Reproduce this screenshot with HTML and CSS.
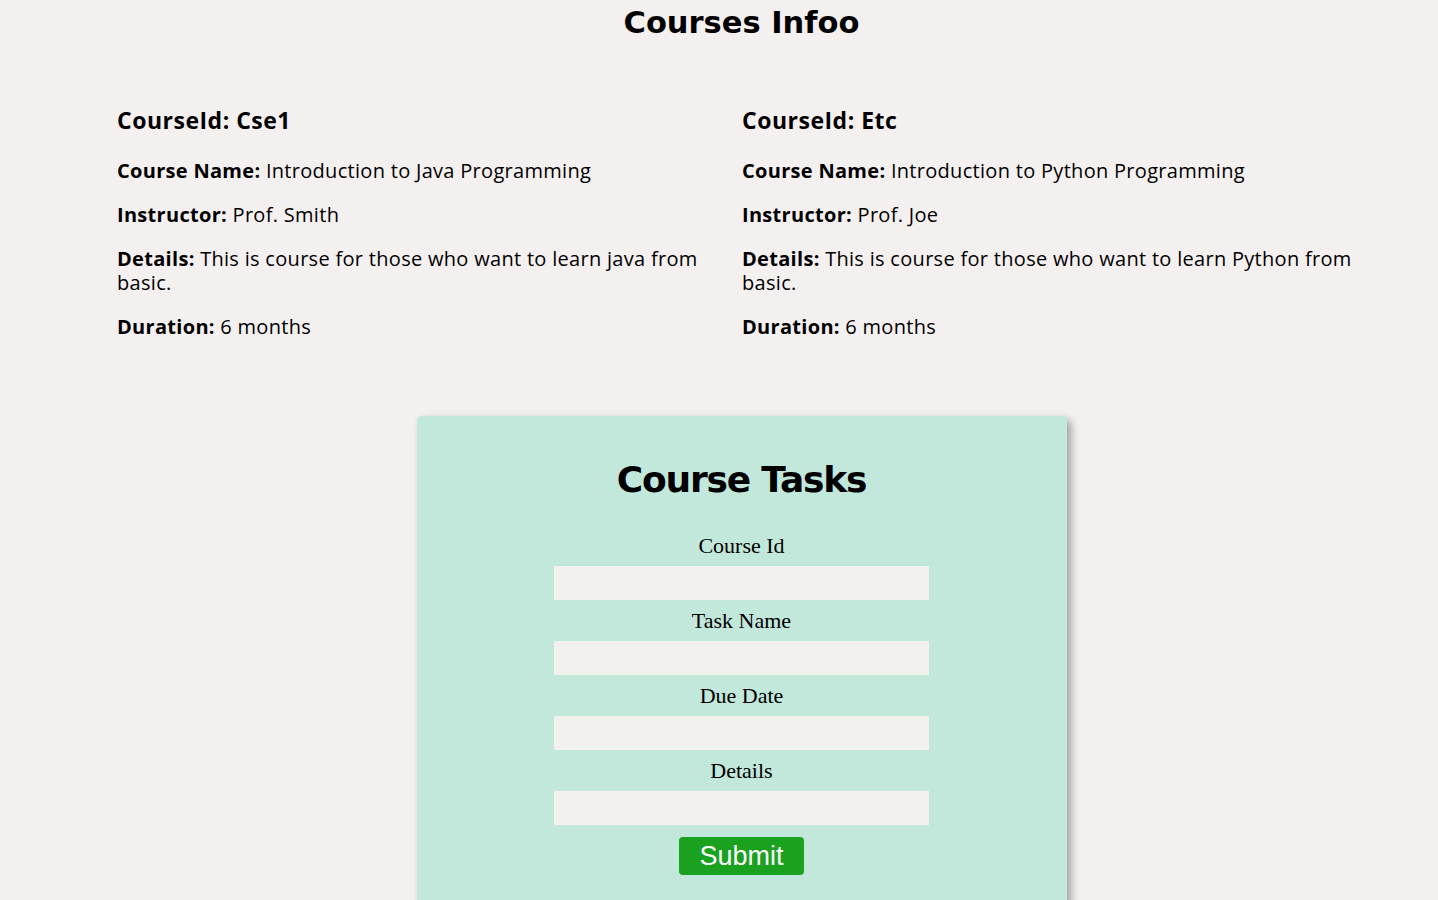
FILE: index.html
```html
<!DOCTYPE html>
<html>
<head>
<meta charset="utf-8">
<title>Courses Infoo</title>
<link rel="stylesheet" href="styles.css">
</head>
<body>
<h1 class="page-title">Courses Infoo</h1>
<div class="courses">
  <div class="course">
    <h2 class="course-id">CourseId: Cse1</h2>
    <p><b>Course Name:</b> Introduction to Java Programming</p>
    <p><b>Instructor:</b> Prof. Smith</p>
    <p><b>Details:</b> This is course for those who want to learn java from basic.</p>
    <p><b>Duration:</b> 6 months</p>
  </div>
  <div class="course">
    <h2 class="course-id">CourseId: Etc</h2>
    <p><b>Course Name:</b> Introduction to Python Programming</p>
    <p><b>Instructor:</b> Prof. Joe</p>
    <p><b>Details:</b> This is course for those who want to learn Python from basic.</p>
    <p><b>Duration:</b> 6 months</p>
  </div>
</div>
<div class="card">
  <h2 class="card-title">Course Tasks</h2>
  <form class="task-form">
    <label class="field-label">Course Id</label>
    <input class="field" type="text">
    <label class="field-label">Task Name</label>
    <input class="field" type="text">
    <label class="field-label">Due Date</label>
    <input class="field" type="text">
    <label class="field-label">Details</label>
    <input class="field" type="text">
    <button class="submit" type="button">Submit</button>
  </form>
</div>
</body>
</html>
```

FILE: styles.css
```css
html, body {
  margin: 0;
  padding: 0;
}
body {
  background: #f5f0f0;
  color: #000;
  font-family: "Open Sans", "Noto Sans", sans-serif;
  padding-left: 45px;
}
.page-title {
  margin: 0;
  padding-top: 5px;
  text-align: center;
  font-family: "DejaVu Sans", Verdana, sans-serif;
  font-weight: bold;
  font-size: 30.5px;
  line-height: 36px;
}
.courses {
  display: grid;
  grid-template-columns: 625px 625px;
  padding: 64px 0 0 72px;
}
.course-id {
  margin: 0 0 24px;
  font-size: 23px;
  letter-spacing: 0.5px;
  line-height: 30px;
  font-weight: bold;
}
.course p {
  margin: 0 0 20px;
  font-size: 20px;
  letter-spacing: 0.3px;
  line-height: 24px;
}
.card {
  width: 650px;
  margin: 57px auto 0;
  background: #c2e8dc;
  border-radius: 5px;
  box-shadow: 4px 4px 8px rgba(0,0,0,0.35);
  padding: 41px 0 40px;
}
.card-title {
  margin: 0 0 22px;
  text-align: center;
  font-family: "DejaVu Sans", sans-serif;
  font-size: 36px;
  letter-spacing: -1.2px;
  line-height: 46px;
  font-weight: bold;
}
.task-form {
  display: flex;
  flex-direction: column;
  align-items: center;
}
.field-label {
  display: block;
  font-family: "Liberation Serif", "Times New Roman", serif;
  font-size: 22px;
  line-height: 41px;
  height: 41px;
}
.field {
  display: block;
  width: 375px;
  height: 34px;
  box-sizing: border-box;
  border: none;
  background: #f2f1ee;
  margin: 0;
}
.submit {
  margin-top: 12px;
  width: 125px;
  height: 38px;
  border: none;
  border-radius: 4px;
  background: #19a11f;
  color: #fff;
  font-family: "Liberation Sans", Arial, sans-serif;
  font-size: 27px;
  line-height: 38px;
  padding: 0;
}
```
